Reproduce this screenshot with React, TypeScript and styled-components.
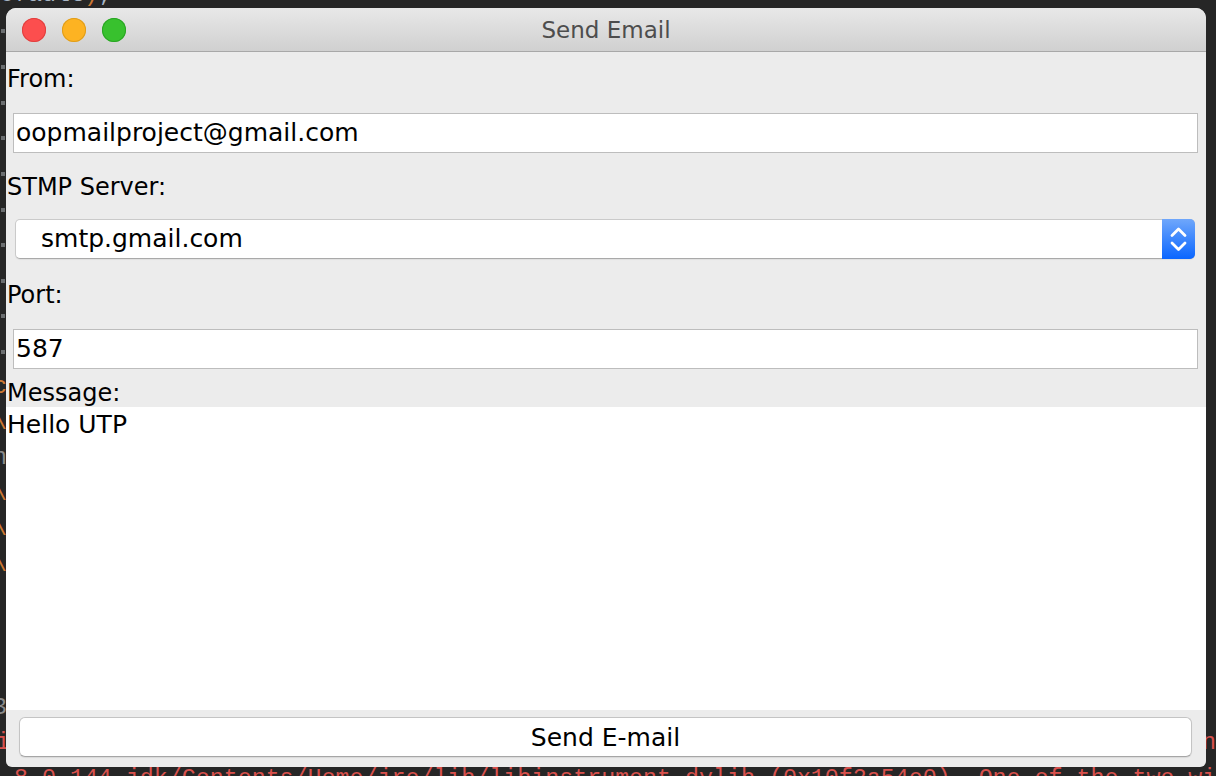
import React from "react";
import styled, { createGlobalStyle } from "styled-components";

const GlobalStyle = createGlobalStyle`
  html, body { margin: 0; padding: 0; background: #262626; }
  body { width: 1216px; height: 776px; overflow: hidden; }
`;

const Desktop = styled.div`
  position: relative;
  width: 1216px;
  height: 776px;
  overflow: hidden;
  background: #262626;
`;

const Console = styled.div`
  display: flex;
  flex-direction: column;
  margin-top: -22px;
  font-family: "Liberation Mono", "DejaVu Sans Mono", monospace;
  font-size: 23.3px;
  line-height: 35.64px;
  white-space: pre;
  color: #a9b7c6;
`;

const ConsoleLine = styled.div<{ $shift?: number; $tone?: string }>`
  height: 35.64px;
  display: flex;
  justify-content: space-between;
  margin-left: ${(p) => p.$shift ?? 0}px;
  color: ${(p) => p.$tone ?? "#a9b7c6"};
`;

const Tok = styled.span<{ $c: string }>`
  color: ${(p) => p.$c};
`;

const Guide = styled.span`
  display: inline-block;
  align-self: center;
  width: 4px;
  height: 4px;
  margin-left: 1px;
  background: #6b6e70;
`;

const Window = styled.div`
  position: absolute;
  left: 6px;
  top: 8px;
  width: 1200px;
  height: 759px;
  display: flex;
  flex-direction: column;
  background: #ececec;
  border-radius: 10px 10px 6px 6px;
  overflow: hidden;
  font-family: "DejaVu Sans", "Liberation Sans", sans-serif;
  color: #000;
`;

const TitleBar = styled.div`
  flex: none;
  height: 43px;
  display: grid;
  grid-template-columns: 1fr auto 1fr;
  align-items: center;
  background: linear-gradient(#e8e8e8, #d0d0d0);
  border-bottom: 1px solid #a8a8a8;
`;

const Lights = styled.div`
  display: flex;
  gap: 16px;
  padding-left: 16px;
`;

const Light = styled.span<{ $fill: string; $edge: string }>`
  width: 24px;
  height: 24px;
  border-radius: 50%;
  background: ${(p) => p.$fill};
  box-shadow: inset 0 0 0 1px ${(p) => p.$edge};
`;

const Title = styled.div`
  font-size: 23px;
  color: #4d4d4d;
  padding-top: 1px;
`;

const LabelRow = styled.div`
  flex: none;
  height: 54px;
  padding-left: 1px;
  font-size: 24px;
  line-height: 54px;
`;

const FieldRow = styled.div`
  flex: none;
  height: 54px;
  box-sizing: border-box;
  padding: 7px 8px 0 7px;
`;

const TextField = styled.div`
  box-sizing: border-box;
  height: 40px;
  background: #fff;
  border: 1px solid #bdbdbd;
  padding: 0 2px;
  font-size: 25px;
  line-height: 38px;
`;

const ComboRow = styled.div`
  flex: none;
  height: 54px;
  box-sizing: border-box;
  padding: 5px 11px 0 9px;
`;

const Combo = styled.div`
  box-sizing: border-box;
  height: 40px;
  display: flex;
  background: #fff;
  border: 1px solid #cacaca;
  border-bottom-color: #a9a9a9;
  border-radius: 5px;
  box-shadow: 0 1px 1px rgba(0, 0, 0, 0.06);
`;

const ComboValue = styled.div`
  flex: 1;
  padding-left: 25px;
  font-size: 25px;
  line-height: 38px;
`;

const Stepper = styled.div`
  width: 33px;
  margin: -1px -1px -1px 0;
  display: flex;
  align-items: center;
  justify-content: center;
  border-radius: 0 5px 5px 0;
  background: linear-gradient(#6fa7fb, #0a66ff);
`;

const MessageLabel = styled.div`
  flex: none;
  height: 31px;
  box-sizing: border-box;
  padding: 3px 0 0 1px;
  font-size: 24px;
  line-height: 28px;
`;

const MessageArea = styled.div`
  flex: 1;
  background: #fff;
  padding: 3px 0 0 1px;
  font-size: 25px;
  line-height: 30px;
`;

const ButtonBar = styled.div`
  flex: none;
  height: 57px;
  box-sizing: border-box;
  padding: 7px 14px 0 13px;
`;

const PushButton = styled.button`
  display: block;
  width: 100%;
  height: 40px;
  padding: 0;
  background: #fff;
  border: 1px solid #c4c4c4;
  border-bottom-color: #a6a6a6;
  border-radius: 6px;
  box-shadow: 0 1px 1px rgba(0, 0, 0, 0.08);
  font-family: inherit;
  font-size: 25px;
  color: #000;
`;

const ORANGE = "#cc7832";
const RED = "#d9514d";

export default function App() {
  const guides = Array.from({ length: 10 });
  return (
    <Desktop>
      <GlobalStyle />
      <Console>
        <ConsoleLine>
          <span>
            efault<Tok $c={ORANGE}>)</Tok>;
          </span>
        </ConsoleLine>
        {guides.map((_, i) => (
          <ConsoleLine key={i}>
            <Guide />
          </ConsoleLine>
        ))}
        <ConsoleLine $shift={-7} $tone={ORANGE}>c</ConsoleLine>
        <ConsoleLine $shift={-7} $tone={ORANGE}>\</ConsoleLine>
        <ConsoleLine $shift={-7} $tone="#8a8a8a">n</ConsoleLine>
        <ConsoleLine $shift={-7} $tone={ORANGE}>\</ConsoleLine>
        <ConsoleLine $shift={-7} $tone={ORANGE}>\</ConsoleLine>
        <ConsoleLine $shift={-7} $tone={ORANGE}>\</ConsoleLine>
        <ConsoleLine> </ConsoleLine>
        <ConsoleLine> </ConsoleLine>
        <ConsoleLine> </ConsoleLine>
        <ConsoleLine $shift={-7} $tone="#8a8a8a">3</ConsoleLine>
        <ConsoleLine $shift={-4} $tone={RED}>
          <span>i</span>
          <span>Ln</span>
        </ConsoleLine>
        <ConsoleLine $tone={RED}>
          {" 8.0_144.jdk/Contents/Home/jre/lib/libinstrument.dylib (0x10f2a54e0). One of the two will be used."}
        </ConsoleLine>
      </Console>

      <Window>
        <TitleBar>
          <Lights>
            <Light $fill="#fc4e4e" $edge="#e0403f" />
            <Light $fill="#fdb322" $edge="#df9d1c" />
            <Light $fill="#38c12e" $edge="#2aa524" />
          </Lights>
          <Title>Send Email</Title>
          <span />
        </TitleBar>

        <LabelRow>From:</LabelRow>
        <FieldRow>
          <TextField>oopmailproject@gmail.com</TextField>
        </FieldRow>

        <LabelRow>STMP Server:</LabelRow>
        <ComboRow>
          <Combo>
            <ComboValue>smtp.gmail.com</ComboValue>
            <Stepper>
              <svg width="33" height="40" viewBox="0 0 33 40" fill="none">
                <path
                  d="M10 16.5 L16.5 10 L23 16.5"
                  stroke="#fff"
                  strokeWidth="2.8"
                  strokeLinecap="round"
                  strokeLinejoin="round"
                />
                <path
                  d="M10 24 L16.5 30.5 L23 24"
                  stroke="#fff"
                  strokeWidth="2.8"
                  strokeLinecap="round"
                  strokeLinejoin="round"
                />
              </svg>
            </Stepper>
          </Combo>
        </ComboRow>

        <LabelRow>Port:</LabelRow>
        <FieldRow>
          <TextField>587</TextField>
        </FieldRow>

        <MessageLabel>Message:</MessageLabel>
        <MessageArea>Hello UTP</MessageArea>

        <ButtonBar>
          <PushButton>Send E-mail</PushButton>
        </ButtonBar>
      </Window>
    </Desktop>
  );
}
